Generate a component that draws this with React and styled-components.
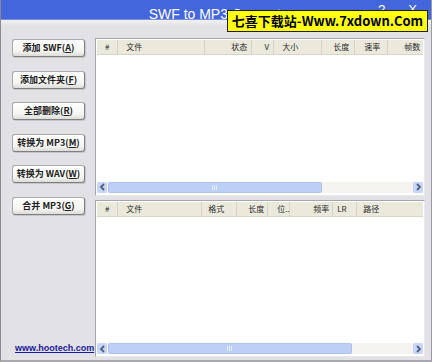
import React from 'react';
import styled, { createGlobalStyle } from 'styled-components';

const GlobalStyle = createGlobalStyle`
  html, body {
    margin: 0;
    padding: 0;
    background: #e2e1e5;
  }
`;

const buttons = [
  { label: '添加 SWF', key: 'A' },
  { label: '添加文件夹', key: 'F' },
  { label: '全部删除', key: 'R' },
  { label: '转换为 MP3', key: 'M' },
  { label: '转换为 WAV', key: 'W' },
  { label: '合并 MP3', key: 'G' },
];

const topColumns = [
  { title: '#', width: 21, align: 'center' },
  { title: '文件', width: 87, align: 'left', pad: 8 },
  { title: '状态', width: 47, align: 'right', pad: 4 },
  { title: 'V', width: 22, align: 'right', pad: 4 },
  { title: '大小', width: 48, align: 'left', pad: 8 },
  { title: '长度', width: 33, align: 'right', pad: 5 },
  { title: '速率', width: 33, align: 'right', pad: 9 },
  { title: '帧数', width: 35, align: 'right', pad: 3 },
];

const bottomColumns = [
  { title: '#', width: 21, align: 'center' },
  { title: '文件', width: 84, align: 'left', pad: 8 },
  { title: '格式', width: 35, align: 'left', pad: 6 },
  { title: '长度', width: 31, align: 'right', pad: 3 },
  { title: '位..', width: 22, align: 'left', pad: 9 },
  { title: '频率', width: 43, align: 'right', pad: 3 },
  { title: 'LR', width: 24, align: 'left', pad: 4 },
  { title: '路径', width: 44, align: 'left', pad: 6 },
];

const Chevron = ({ dir }) => (
  <svg width="7" height="8" viewBox="0 0 7 8">
    <path
      d={dir === 'left' ? 'M5 1 L2 4 L5 7' : 'M2 1 L5 4 L2 7'}
      fill="none"
      stroke="#4d6185"
      strokeWidth="1.8"
    />
  </svg>
);

const ListPanel = ({ columns, thumbWidth }) => (
  <Panel>
    <Header>
      {columns.map((col) => (
        <HeaderCell key={col.title} $width={col.width} $align={col.align} $pad={col.pad || 0}>
          {col.title}
        </HeaderCell>
      ))}
    </Header>
    <Rows />
    <ScrollBar>
      <ArrowButton>
        <Chevron dir="left" />
      </ArrowButton>
      <Thumb style={{ width: thumbWidth }}>
        <Grip />
      </Thumb>
      <Track />
      <ArrowButton>
        <Chevron dir="right" />
      </ArrowButton>
    </ScrollBar>
  </Panel>
);

const App = () => {
  return (
    <>
      <GlobalStyle />
      <Window>
        <TitleBar>
          <Title>SWF to MP3 Converter</Title>
          <TitleButtons>
            <TitleButton>?</TitleButton>
            <TitleButton>X</TitleButton>
          </TitleButtons>
          <Watermark>七喜下载站-Www.7xdown.Com</Watermark>
        </TitleBar>
        <Body>
          <Sidebar>
            <ButtonStack>
              {buttons.map((b) => (
                <ActionButton key={b.key}>
                  {b.label}(<u>{b.key}</u>)
                </ActionButton>
              ))}
            </ButtonStack>
            <SiteLink href="#">www.hootech.com</SiteLink>
          </Sidebar>
          <Lists>
            <ListPanel columns={topColumns} thumbWidth={214} />
            <ListPanel columns={bottomColumns} thumbWidth={244} />
          </Lists>
        </Body>
      </Window>
    </>
  );
};

const Window = styled.div`
  width: 432px;
  height: 362px;
  box-sizing: border-box;
  display: flex;
  flex-direction: column;
  background: #e2e1e5;
  border-left: 1px solid #8a8a8e;
  border-right: 1px solid #9a9a9e;
  border-bottom: 2px solid #a8a8ac;
  overflow: hidden;
`;

const TitleBar = styled.div`
  position: relative;
  height: 19px;
  flex-shrink: 0;
  display: flex;
  align-items: center;
  justify-content: center;
  background: #4466dc;
  border-bottom: 1px solid #7c8fd8;
`;

const Title = styled.div`
  font-family: 'Liberation Sans', Arial, sans-serif;
  font-size: 14px;
  color: #ffffff;
  margin-left: 10px;
  margin-top: 8px;
`;

const TitleButtons = styled.div`
  position: absolute;
  right: 14px;
  top: 2px;
  display: flex;
  gap: 23px;
`;

const TitleButton = styled.span`
  font-family: 'Liberation Sans', Arial, sans-serif;
  font-size: 13px;
  color: #ffffff;
`;

const Watermark = styled.div`
  position: absolute;
  left: 226px;
  top: 10px;
  width: 201px;
  height: 22px;
  box-sizing: border-box;
  background: #ffff14;
  border: 1px solid #202020;
  font-family: 'Noto Sans CJK SC', 'Liberation Sans', sans-serif;
  font-weight: 700;
  font-size: 13px;
  line-height: 20px;
  color: #000000;
  text-align: center;
  z-index: 2;
`;

const Body = styled.div`
  flex: 1;
  display: flex;
  background: linear-gradient(#f2f2f4 0px, #e2e1e5 6px);
`;

const Sidebar = styled.div`
  width: 95px;
  display: flex;
  flex-direction: column;
  justify-content: space-between;
  padding: 19px 0 7px 11px;
  box-sizing: border-box;
`;

const ButtonStack = styled.div`
  display: flex;
  flex-direction: column;
  gap: 13.6px;
`;

const ActionButton = styled.button`
  width: 73px;
  height: 18px;
  padding: 0;
  box-sizing: border-box;
  border: 1px solid #a9a9ab;
  border-right-color: #7f7f82;
  border-bottom-color: #7f7f82;
  border-radius: 3px;
  background: linear-gradient(#ffffff, #f4f4f2 70%, #dcdcd8);
  box-shadow: 1px 1px 0 #c6c6c8;
  font-family: 'Noto Sans CJK SC', 'Liberation Sans', sans-serif;
  font-size: 9px;
  font-weight: 700;
  color: #202020;
  line-height: 16px;
  white-space: nowrap;

  u {
    text-decoration: underline;
  }
`;

const SiteLink = styled.a`
  font-family: 'Liberation Sans', Arial, sans-serif;
  font-size: 9px;
  font-weight: 700;
  color: #1a1a9c;
  text-decoration: underline;
  margin-left: 3px;
`;

const Lists = styled.div`
  flex: 1;
  display: flex;
  flex-direction: column;
  gap: 4px;
  padding: 18px 7px 3px 1px;
`;

const Panel = styled.div`
  flex: 1;
  display: flex;
  flex-direction: column;
  background: #ffffff;
  border: 1px solid #a5a5a8;
  border-right-color: #e8e8ea;
  border-bottom-color: #e8e8ea;
  padding: 1px 1px 2px 1px;
`;

const Header = styled.div`
  display: flex;
  height: 14px;
  background: #ebe9dc;
  border-bottom: 1px solid #d8d5c4;
`;

const HeaderCell = styled.div`
  width: ${({ $width }) => $width}px;
  flex-shrink: 0;
  box-sizing: border-box;
  padding: 0 ${({ $pad }) => $pad}px;
  text-align: ${({ $align }) => $align};
  font-family: 'Noto Sans CJK SC', 'Liberation Sans', sans-serif;
  font-size: 8px;
  line-height: 14px;
  color: #2a2a2a;
  border-right: 1px solid #d6d3c2;
  white-space: nowrap;
  overflow: hidden;

  &:last-child {
    flex: 1;
    border-right: none;
  }
`;

const Rows = styled.div`
  flex: 1;
`;

const ScrollBar = styled.div`
  height: 11px;
  display: flex;
  background: #f5f4ef;
`;

const ArrowButton = styled.div`
  width: 10px;
  display: flex;
  align-items: center;
  justify-content: center;
  background: #c7d6f3;
  border-radius: 2px;
`;

const Thumb = styled.div`
  flex-shrink: 0;
  display: flex;
  align-items: center;
  justify-content: center;
  background: #bccff4;
  border: 1px solid #aec2ea;
  box-sizing: border-box;
  border-radius: 2px;
  margin-left: 1px;
`;

const Grip = styled.div`
  width: 6px;
  height: 5px;
  background: repeating-linear-gradient(90deg, #e6eefc 0 1px, transparent 1px 2px);
`;

const Track = styled.div`
  flex: 1;
`;

export default App;
